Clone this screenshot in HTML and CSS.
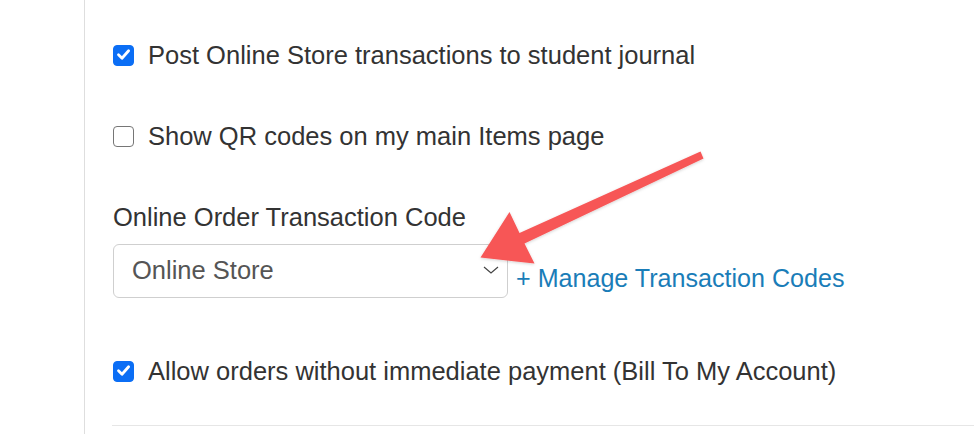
FILE: index.html
```html
<!DOCTYPE html>
<html lang="en">
<head>
<meta charset="utf-8">
<title>Settings</title>
<link rel="stylesheet" href="styles.css">
</head>
<body>
<div class="page">
  <aside class="sidebar"></aside>
  <main class="main">
    <label class="check-row first">
      <span class="box checked"><svg viewBox="0 0 21 21" width="21" height="21"><path d="M5.5 10.8 L9 14.2 L15.6 6.8" fill="none" stroke="#fff" stroke-width="2.8" stroke-linecap="round" stroke-linejoin="round"/></svg></span>
      <span class="check-text">Post Online Store transactions to student journal</span>
    </label>
    <label class="check-row second">
      <span class="box"></span>
      <span class="check-text">Show QR codes on my main Items page</span>
    </label>
    <div class="field-label">Online Order Transaction Code</div>
    <div class="select-row">
      <div class="select">
        <span class="select-text">Online Store</span>
        <svg class="chevron" viewBox="0 0 16 8" width="16" height="8"><path d="M1 1 L8 7 L15 1" fill="none" stroke="#444" stroke-width="1.2"/></svg>
      </div>
      <a class="manage-link" href="#">+ Manage Transaction Codes</a>
    </div>
    <label class="check-row third">
      <span class="box checked"><svg viewBox="0 0 21 21" width="21" height="21"><path d="M5.5 10.8 L9 14.2 L15.6 6.8" fill="none" stroke="#fff" stroke-width="2.8" stroke-linecap="round" stroke-linejoin="round"/></svg></span>
      <span class="check-text">Allow orders without immediate payment (Bill To My Account)</span>
    </label>
    <div class="divider"></div>
  </main>
  <svg class="arrow" viewBox="0 0 974 434" width="974" height="434">
    <defs>
      <filter id="sh" x="-10%" y="-10%" width="120%" height="120%">
        <feDropShadow dx="0" dy="1" stdDeviation="1.5" flood-color="#000" flood-opacity="0.18"/>
      </filter>
    </defs>
    <polygon filter="url(#sh)" fill="#f75656" points="700.5,151.5 519.5,233 509.5,212 480.5,257.5 534.5,263.5 524.5,243.5 703.5,158.5"/>
  </svg>
</div>
</body>
</html>
```
FILE: styles.css
```css
html, body {
  margin: 0;
  padding: 0;
  background: #fff;
}
body {
  font-family: "Liberation Sans", Arial, Helvetica, sans-serif;
  color: #333;
  font-size: 25.5px;
}
.page {
  position: relative;
  display: flex;
  width: 974px;
  height: 434px;
  overflow: hidden;
}
.sidebar {
  width: 84px;
  flex: none;
  border-right: 1px solid #dedede;
}
.main {
  flex: 1;
  padding-left: 28px;
  display: flex;
  flex-direction: column;
}
.check-row {
  display: flex;
  align-items: center;
  gap: 14px;
  height: 30px;
  line-height: 30px;
}
.check-row.first { margin-top: 40px; }
.check-row.second { margin-top: 51px; }
.check-row.third { margin-top: 58px; }
.box {
  width: 21px;
  height: 21px;
  box-sizing: border-box;
  border: 1.5px solid #767676;
  border-radius: 4px;
  background: #fff;
  display: flex;
  flex: none;
}
.box.checked {
  background: #0b6ef5;
  border-color: #0b6ef5;
}
.box.checked svg {
  margin: -1.5px;
}
.check-text {
  color: #333;
}
.field-label {
  margin-top: 51px;
  height: 30px;
  line-height: 30px;
  color: #333;
}
.select-row {
  margin-top: 12px;
  display: flex;
  align-items: flex-end;
  gap: 8px;
}
.select {
  width: 395px;
  height: 54px;
  box-sizing: border-box;
  border: 1px solid #cfcfcf;
  border-radius: 6px;
  display: flex;
  align-items: center;
  padding: 0 8px 0 18px;
  color: #555;
}
.select-text {
  margin-top: -2px;
}
.chevron {
  margin-left: auto;
  margin-top: -2px;
}
.manage-link {
  color: #1a7db8;
  text-decoration: none;
  font-size: 25.1px;
  line-height: 30px;
  margin-bottom: 5px;
}
.divider {
  margin-top: 39px;
  margin-left: -1px;
  border-top: 1px solid #e6e6e6;
}
.arrow {
  position: absolute;
  top: 0;
  left: 0;
  pointer-events: none;
}
```
